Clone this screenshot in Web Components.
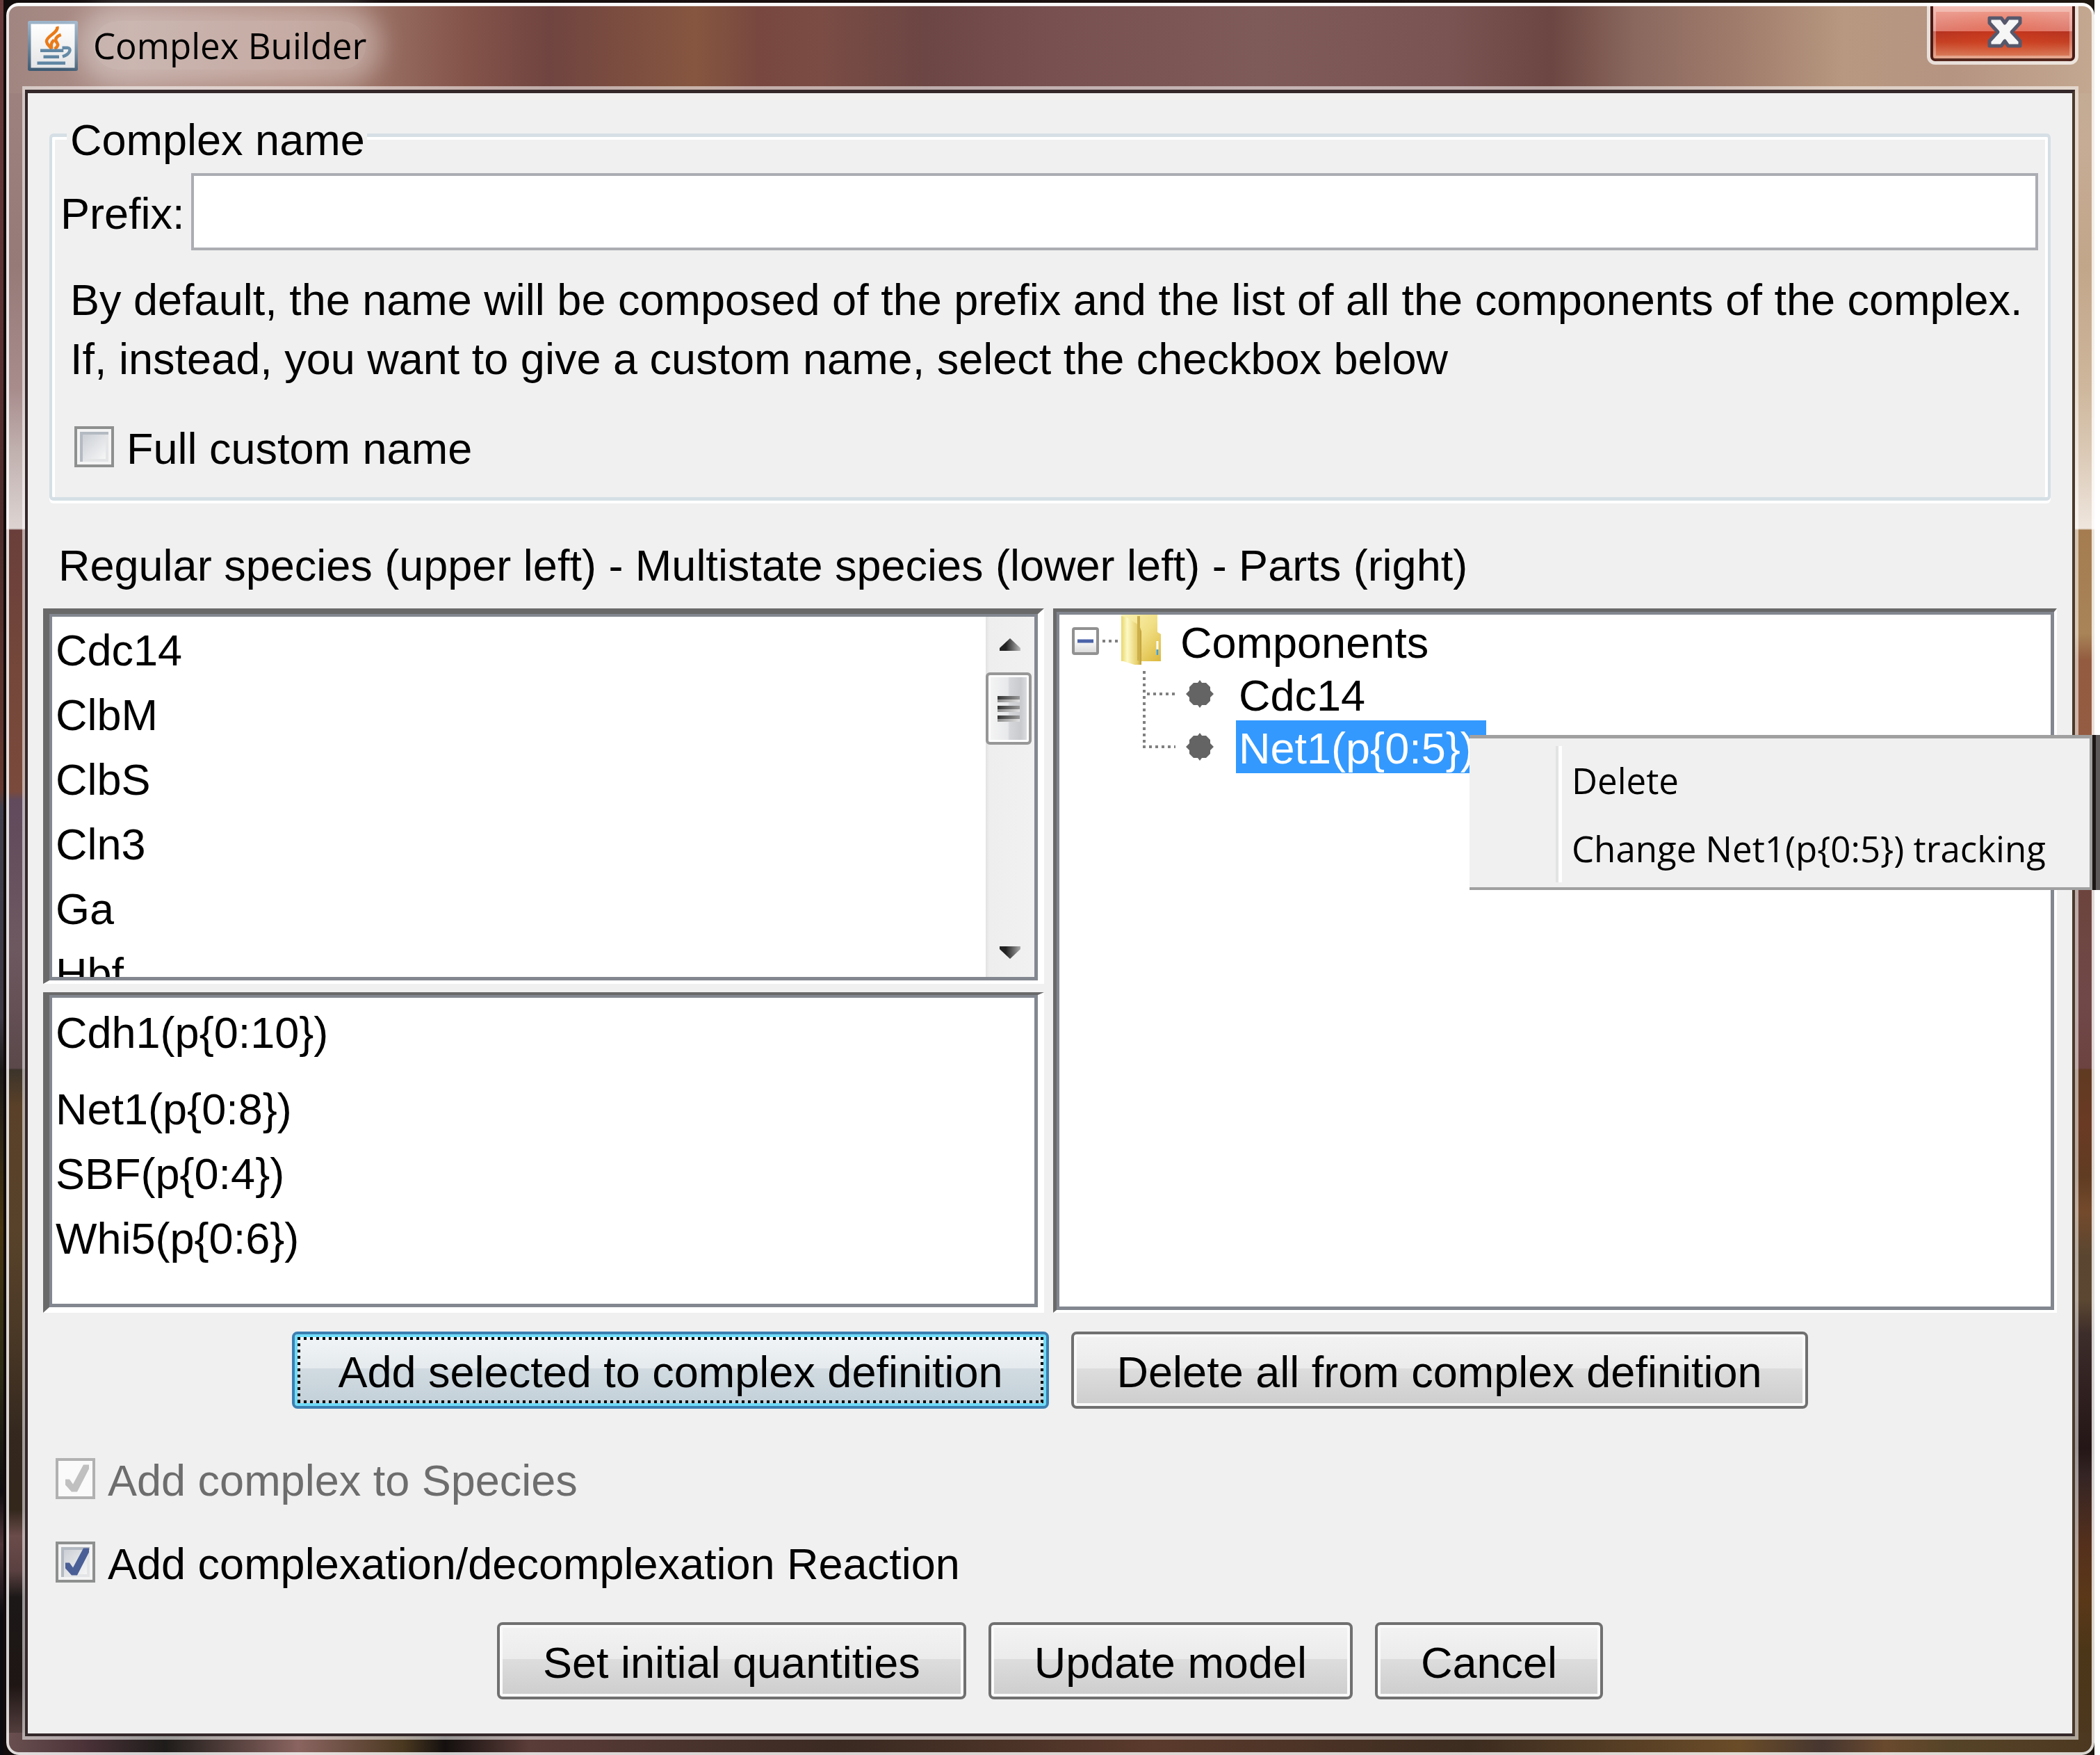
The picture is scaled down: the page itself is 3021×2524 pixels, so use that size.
<!DOCTYPE html>
<html lang="en">
<head>
<meta charset="utf-8">
<title>Complex Builder</title>
<style>
  html, body { margin: 0; height: 100%; background: #fff; }
  body { font: 63px/70px "Liberation Sans", Arial, sans-serif; color: #000; }
</style>
</head>
<body>
<complex-builder></complex-builder>

<script>
const define = (name, html, setup) => {
  const template = document.createElement('template');
  template.innerHTML = html;
  customElements.define(name, class extends HTMLElement {
    connectedCallback() {
      if (this.shadowRoot) return;
      this.attachShadow({ mode: 'open' }).append(template.content.cloneNode(true));
      if (setup) setup(this, this.shadowRoot);
    }
  });
};

/* Glass window frame with a title bar and a close button */
define('glass-window', `
  <style>
    :host { display: flex; box-sizing: border-box; height: 100%; margin-right: 8px; padding: 4px 0 0 9px;
      background:
        linear-gradient(#6a3c3c, #5a3030 20%, #4c2c2a 30%, #64382e 45%, #403e4c 46%, #3c3844 58%, #1c1a18 61%, #46340f 70%, #2c2c14 78%, #100e10 85%, #4c3438 88%, #0c0c10 92%) left / 5px 100% no-repeat,
        linear-gradient(90deg, #120c0c, #1c1210 60%, #1e170f); }
    .frame { flex: 1; display: flex; flex-direction: column; border-radius: 18px; box-sizing: border-box;
      box-shadow: inset 0 5px rgba(255,255,255,.86), inset 0 0 0 4px rgba(255,255,255,.8);
      background:
        linear-gradient(90deg, #a08580, #b09088 6%, #a88074 14%, #986e62 18%, #84544a 22%, #704440 26%, #7a4c40 29%, #865640 33%, #784840 36%, #7a4c44 39%, #6c4644 44%, #785050 50%, #7e5a58 60%, #7a5452 69%, #6c4642 74%, #8a685e 78%, #a07c6c 83%, #b89880 88%, #b59482 93%, #c4a890) top / 100% 130px no-repeat,
        linear-gradient(90deg, #6a5050, #4a3238 3.8%, #1e1c1a 7.6%, #8a6460 14%, #4a3820 19%, #14100f 21%, #5a3c38 25%, #3a2a22 40%, #5a3a2c 55%, #3c2c20 70%, #6a4c28 83%, #463630 87%, #6a4a2e 90%, #564428 93%, #4c3820) bottom / 100% 32px no-repeat,
        linear-gradient(#a08582, #957a78 15%, #a88c8c 22%, #c0b0ae 25.5%, #ddd4d2 30%, #6a3f3b 30.1%, #74473a 38%, #7a4a3c 45%, #604a5c 45.5%, #6e5860 54%, #5a484a 60.8%, #3c342a 60.9%, #5a4028 63%, #58422a 70%, #4a3826 76%, #33271e 82%, #33271c 86%, #6a4c4a 87.5%, #5a4040 89.5%, #1c1818 91%, #1e1614 96%, #6a5050) left / 32px 100% no-repeat,
        linear-gradient(#bfa890, #c6ac95 8%, #c2a68a 15%, #ceb79c 22%, #dccbb8 26%, #efe6de 30%, #a47c50 30.1%, #a88458 36%, #935c40 37.5%, #945c42 42%, #6c443c 50%, #704848 57%, #6c4340 60.8%, #603a22 60.9%, #6a3a24 64%, #603c22 67%, #744a2c 69%, #5a4630 71.5%, #5c4832 74%, #3c2c2a 76%, #241616 82.5%, #342424 84%, #54301c 88%, #5a3818 91%, #4c3618 94%, #4c3820) right / 32px 100% no-repeat; }
    header { display: flex; align-items: center; height: 120px; padding: 0 23px 0 31px; box-sizing: border-box; }
    h1 { margin: 0 auto 0 0; padding: 2px 0 0 22px; font: 51px/70px "Open Sans", "Noto Sans", sans-serif; }
    h1 span { border-radius: 40px; background: rgba(255,255,255,.34); box-shadow: 0 0 34px 22px rgba(255,255,255,.34); }
    .icon { display: block; width: 72px; height: 72px; padding-top: 4px; }
    button { align-self: flex-start; box-sizing: border-box; width: 218px; height: 89px; padding: 0; font: inherit;
      border: 5px solid rgba(255,255,255,.7); border-top-color: #fff; border-radius: 0 0 12px 12px;
      display: flex; align-items: center; justify-content: center;
      box-shadow: inset 4px 0 #4a1a14, inset -4px 0 #4a1a14, inset 0 -4px #56281e, inset 0 0 0 8px rgba(255,255,255,.3);
      background:
        radial-gradient(closest-side, rgba(255,70,20,.25), transparent),
        linear-gradient(#f0a597, #dd7c70 46%, #b43220 46%, #c44024 65%, #e0906c) padding-box; }
    button svg { display: block; width: 50px; height: 46px; margin: -6px 0 0 5px; }
    main { flex: 1; display: flex; flex-direction: column; min-height: 0; margin: 0 23px 22px;
      border: solid rgba(255,255,255,.55); border-width: 5px 5px 5px 4px; }
    .client { flex: 1; display: flex; flex-direction: column; min-height: 0; background: #f0f0f0; position: relative;
      border: solid #34282a; border-width: 5px 4px 4px; border-right-color: #4a3a2c; }
  </style>
  <div class="frame">
    <header>
      <svg class="icon" viewBox="0 0 16 16" aria-hidden="true">
        <defs>
          <linearGradient id="rim" x2="0" y2="1"><stop offset="0" stop-color="#9fb6cb"/><stop offset="1" stop-color="#3e5a72"/></linearGradient>
          <linearGradient id="face" x2="0" y2="1"><stop offset="0" stop-color="#fff"/><stop offset="1" stop-color="#e4e4e6"/></linearGradient>
        </defs>
        <rect width="16" height="16" rx=".6" fill="url(#rim)"/>
        <rect x="1" y="1" width="14" height="14" fill="url(#face)"/>
        <path d="M9.4 1.8C9.9 3.8 6 4.8 6 6.5c0 1 1 1.6 1.6 2.4-.2-1.2-.2-2 .8-2.8M10.6 4.4C9.2 4.9 8.3 6 9.4 7.1c.5.7 0 1.3-.8 1.9" fill="none" stroke="#ea7a18" stroke-width="1"/>
        <path d="M4 9.5h7.4M5 11.5h5M3 13.5h9M11 8.6h1.7c1.2 0 1.1 2-1.6 2.8" fill="none" stroke="#5f86a3" stroke-width="1"/>
      </svg>
      <h1><span></span></h1>
      <button type="button" aria-label="Close">
        <svg viewBox="0 0 50 46" aria-hidden="true">
          <path d="M3 3H20L25 10L30 3H47V10L35 23L47 36V43H30L25 36L20 43H3V36L15 23L3 10Z" fill="#f6f6f6" stroke="#56586c" stroke-width="5" stroke-linejoin="round"/>
        </svg>
      </button>
    </header>
    <main><div class="client"><slot></slot></div></main>
  </div>`,
  (host, root) => { root.querySelector('h1 span').textContent = host.getAttribute('caption'); });

/* Etched group box */
define('group-box', `
  <style>
    :host { display: block; }
    fieldset { margin: 0; min-width: 0; padding: 13px 14px 38px 12px;
      border: solid #d5dfe5; border-width: 5px 4px; border-radius: 6px;
      box-shadow: inset 4px 4px #fff, inset -4px 0 #fff, 0 4px #fff; }
    legend { margin-left: 9px; padding: 14px 3px 0 5px; background: #f0f0f0; line-height: 70px; }
  </style>
  <fieldset><legend></legend><slot></slot></fieldset>`,
  (host, root) => { root.querySelector('legend').textContent = host.getAttribute('caption'); });

define('text-field', `
  <style>
    :host { display: flex; align-items: center; gap: 9px; }
    label { padding-top: 5px; }
    input { flex: 1; min-width: 0; box-sizing: border-box; height: 111px; padding: 0 12px; border: 4px solid #abadb3;
      border-radius: 0; background: #fff; font: inherit; color: inherit; outline: none; }
  </style>
  <label for="field"></label><input id="field" type="text">`,
  (host, root) => { root.querySelector('label').textContent = host.getAttribute('label'); });

define('check-field', `
  <style>
    :host { display: block; }
    label { display: flex; width: fit-content; align-items: center; gap: 18px; height: 70px; }
    span { padding-top: 5px; }
    input { appearance: none; flex: none; position: relative; box-sizing: border-box; width: 57px; height: 59px; margin: 0;
      border: 4px solid #8e8f8f; background: linear-gradient(135deg, #cbcfd5, #f6f6f6) center / 33px 35px no-repeat #f4f4f4;
      box-shadow: inset 0 0 0 4px #f4f4f4, inset 8px 8px #b4bac2, inset -8px -8px #e4e5e7; }
    input:checked::after { content: ""; position: absolute; inset: -4px; background: #4b5f97;
      clip-path: polygon(14px 31px, 20px 31px, 25px 38px, 40px 10px, 48px 10px, 48px 16px, 31px 49px, 23px 49px, 14px 39px); }
    input:disabled { border-color: #b1b1b1; background: #fafafa; box-shadow: none; }
    input:disabled::after { background: #c0c0c0; }
    input:disabled + span { color: #6d6d6d; }
  </style>
  <label><input type="checkbox"><span><slot></slot></span></label>`,
  (host, root) => {
    const box = root.querySelector('input');
    box.checked = host.hasAttribute('checked');
    box.disabled = host.hasAttribute('disabled');
  });

define('push-button', `
  <style>
    :host { display: block; }
    button { display: block; box-sizing: border-box; height: 111px; padding: 5px 62px 0; font: inherit; color: #000; white-space: nowrap;
      border: 4px solid #707070; border-radius: 8px; box-shadow: inset 0 0 0 4px #fafafa;
      background: linear-gradient(#f3f3f3, #ebebeb 48%, #dddddd 48%, #cdcdcd); }
    :host([default]) button { border-color: #3c7fb1; box-shadow: inset 0 0 0 4px #70dcf8;
      background:
        repeating-linear-gradient(90deg, #000 0 4px, transparent 4px 9px) center top 4px / calc(100% - 8px) 4px no-repeat,
        repeating-linear-gradient(90deg, #000 0 4px, transparent 4px 9px) center bottom 4px / calc(100% - 8px) 4px no-repeat,
        repeating-linear-gradient(#000 0 4px, transparent 4px 9px) left 4px center / 4px calc(100% - 8px) no-repeat,
        repeating-linear-gradient(#000 0 4px, transparent 4px 9px) right 4px center / 4px calc(100% - 8px) no-repeat,
        linear-gradient(#f2f5f7, #e4eaed 48%, #d1dbe1 48%, #c3d0d8) padding-box; }
  </style>
  <button type="button"><slot></slot></button>`);

define('button-row', `
  <style>:host { display: flex; justify-content: center; gap: 32px; }</style>
  <slot></slot>`);

/* Sunken pane */
define('sunken-pane', `
  <style>
    :host { display: flex; box-sizing: border-box; min-height: 0; overflow: hidden;
      border-style: solid; border-color: #696969 #fff #fff #696969; border-width: 5px 4px 4px 5px; background: #fff; }
    :host([thick]) { border-width: 8px 9px 5px 9px; }
    :host([thick=lower]) { border-width: 4px 9px 8px 9px; }
    div { flex: 1; display: flex; min-width: 0; overflow: hidden; border: solid #828790; border-width: 4px 5px 5px 4px; }
  </style>
  <div><slot></slot></div>`);

define('species-list', `
  <style>
    :host { flex: 1; display: block; overflow: hidden; }
    ul { margin: 0; padding: 2px 5px 0; list-style: none; }
    li { line-height: 93px; }
    :host([spaced]) ul { padding-top: 4px; }
    :host([spaced]) li:first-child { margin-bottom: 17px; }
  </style>
  <ul role="listbox"></ul>`,
  (host, root) => {
    for (const name of host.getAttribute('items').split('|')) {
      const li = document.createElement('li');
      li.setAttribute('role', 'option');
      li.textContent = name;
      root.querySelector('ul').append(li);
    }
  });

define('scroll-track', `
  <style>
    :host { display: flex; flex-direction: column; align-items: center; box-sizing: border-box; width: 70px; padding: 31px 0 26px;
      background: linear-gradient(90deg, #e2e2e2, #eee 8%, #f1f1f1); }
    svg { display: block; width: 32px; height: 18px; }
    .thumb { align-self: flex-start; box-sizing: border-box; width: 66px; height: 104px; margin: 31px 0 auto; border: 4px solid #979797; border-radius: 6px;
      display: flex; flex-direction: column; align-items: center; justify-content: center; gap: 5px;
      box-shadow: inset 0 0 0 3px #fdfdfd; background: linear-gradient(90deg, #f5f5f5, #e8e9eb 48%, #d6d7da 52%, #c8cace 80%, #e2e2e6); }
    i { width: 32px; height: 9px; background: linear-gradient(90deg, #333, #999) top / 100% 5px no-repeat, linear-gradient(90deg, #8a8a8a, #e2e2e2); }
  </style>
  <svg viewBox="0 0 32 18" aria-hidden="true"><defs><linearGradient id="a"><stop offset=".3" stop-color="#222"/><stop offset="1" stop-color="#bbb"/></linearGradient></defs><path d="M16 0L31 14V18H1V14Z" fill="url(#a)"/></svg>
  <div class="thumb"><i></i><i></i><i></i></div>
  <svg viewBox="0 0 32 18" aria-hidden="true"><defs><linearGradient id="b"><stop offset=".3" stop-color="#222"/><stop offset="1" stop-color="#aaa"/></linearGradient></defs><path d="M1 0H31V4L16 18L1 4Z" fill="url(#b)"/></svg>`);

define('component-tree', `
  <style>
    :host { display: block; flex: 1; }
    ul { margin: 0; padding: 0; list-style: none; }
    .row { display: flex; align-items: center; height: 76px; }
    .row > svg { flex: none; display: block; }
    .root { padding-left: 18px; }
    .child { padding-left: 117px; }
    .name { box-sizing: border-box; height: 76px; padding: 5px 16px 0 4px; line-height: 70px; }
    .selected .name { background: #3399ff; color: #fff; }
  </style>
  <ul role="tree">
    <li role="treeitem">
      <div class="row root">
        <svg width="152" height="76" viewBox="0 0 152 76" aria-hidden="true">
          <defs>
            <linearGradient id="box" x2="0" y2="1"><stop offset=".4" stop-color="#fff"/><stop offset="1" stop-color="#d8d8d8"/></linearGradient>
            <linearGradient id="gold" x2="1" y2="1"><stop offset="0" stop-color="#fbf3b4"/><stop offset=".5" stop-color="#f1df85"/><stop offset="1" stop-color="#dcb83c"/></linearGradient>
            <linearGradient id="leaf"><stop offset="0" stop-color="#e8d66e"/><stop offset=".3" stop-color="#fdf9c4"/><stop offset=".8" stop-color="#e6cf6a"/><stop offset="1" stop-color="#bd9b34"/></linearGradient>
          </defs>
          <rect x="2" y="20" width="35" height="36" rx="2" fill="url(#box)" stroke="#919191" stroke-width="4"/>
          <path d="M8 38H31" stroke="#4b63a9" stroke-width="5"/>
          <path d="M44 38H68" stroke="#808080" stroke-width="4" stroke-dasharray="4 5"/>
          <path d="M71 0H123V25L128 28V67H71Z" fill="url(#gold)"/>
          <path d="M71 2Q80 3 88 10Q98 14 100 24V72H90L71 66Z" fill="url(#leaf)"/>
          <path d="M96 2V66" stroke="#cdb04e" stroke-width="4"/>
          <path d="M123 38V58" stroke="#fff" stroke-width="3"/><path d="M123 50V58" stroke="#4aa0c8" stroke-width="3"/>
        </svg>
        <span class="name">Components</span>
      </div>
      <ul role="group">
        <li role="treeitem" class="row child">
          <svg width="137" height="76" viewBox="0 0 137 76" aria-hidden="true">
            <path d="M5 5V76M9 38H50" fill="none" stroke="#808080" stroke-width="4" stroke-dasharray="4 5"/>
            <path d="M85 18l3 4h6l6 6v5l5 5-5 5v5l-6 6h-6l-3 4-3-4h-6l-6-6v-5l-5-5 5-5v-5l6-6h6z" fill="#646464"/>
          </svg>
          <span class="name">Cdc14</span>
        </li>
        <li role="treeitem" class="row child selected" aria-selected="true">
          <svg width="137" height="76" viewBox="0 0 137 76" aria-hidden="true">
            <path d="M5 1V36M3 38H50" fill="none" stroke="#808080" stroke-width="4" stroke-dasharray="4 5"/>
            <path d="M85 18l3 4h6l6 6v5l5 5-5 5v5l-6 6h-6l-3 4-3-4h-6l-6-6v-5l-5-5 5-5v-5l6-6h6z" fill="#646464"/>
          </svg>
          <span class="name">Net1(p{0:5})</span>
        </li>
      </ul>
    </li>
  </ul>`);

define('context-menu', `
  <style>
    :host { display: block; box-sizing: border-box; width: 896px; padding: 11px 0 7px; background: #f0f0f0;
      border: solid #a0a0a0; border-width: 5px 4px 4px 0; box-shadow: 5px 0 #1c1616, 11px 0 #5c585a; }
    div { margin-left: 124px; border-left: 4px solid #e2e3e3; box-shadow: inset 5px 0 #fff; }
    button { display: block; width: 100%; height: 98px; padding: 0 0 0 19px; border: 0; background: none; color: #000;
      font: 51px/98px "Open Sans", "Noto Sans", sans-serif; text-align: left; white-space: nowrap; }
  </style>
  <div role="menu">
    <button type="button" role="menuitem">Delete</button>
    <button type="button" role="menuitem">Change Net1(p{0:5}) tracking</button>
  </div>`);

define('complex-builder', `
  <style>
    :host { display: block; position: relative; height: 100vh; }
    group-box { margin: 18px 31px 0; }
    p { margin: 29px 0 48px 14px; line-height: 85px; white-space: nowrap; }
    .custom { margin-left: 20px; }
    h2 { margin: 58px 44px 27px; font: inherit; }
    .split { flex: 1; min-height: 0; display: grid; grid-template-columns: 1440fr 1444fr; gap: 13px; margin: 0 22px; }
    .left { display: grid; grid-template-rows: 539fr 461fr; gap: 12px; min-height: 0; }
    .actions { margin-top: 27px; }
    .options { display: flex; flex-direction: column; gap: 50px; margin: 65px 40px 52px; }
    .footer { margin-bottom: 49px; }
    context-menu { position: absolute; top: 1057px; right: 11px; }
  </style>
  <glass-window caption="Complex Builder">
    <group-box caption="Complex name">
      <text-field label="Prefix:"></text-field>
      <p>By default, the name will be composed of the prefix and the list of all the components of the complex.<br>If, instead, you want to give a custom name, select the checkbox below</p>
      <check-field class="custom">Full custom name</check-field>
    </group-box>
    <h2>Regular species (upper left) - Multistate species (lower left) - Parts (right)</h2>
    <div class="split">
      <div class="left">
        <sunken-pane thick="upper">
          <species-list items="Cdc14|ClbM|ClbS|Cln3|Ga|Hbf"></species-list>
          <scroll-track></scroll-track>
        </sunken-pane>
        <sunken-pane thick="lower">
          <species-list spaced items="Cdh1(p{0:10})|Net1(p{0:8})|SBF(p{0:4})|Whi5(p{0:6})"></species-list>
        </sunken-pane>
      </div>
      <sunken-pane><component-tree></component-tree></sunken-pane>
    </div>
    <button-row class="actions">
      <push-button default>Add selected to complex definition</push-button>
      <push-button>Delete all from complex definition</push-button>
    </button-row>
    <div class="options">
      <check-field checked disabled>Add complex to Species</check-field>
      <check-field checked>Add complexation/decomplexation Reaction</check-field>
    </div>
    <button-row class="footer">
      <push-button>Set initial quantities</push-button>
      <push-button>Update model</push-button>
      <push-button>Cancel</push-button>
    </button-row>
  </glass-window>
  <context-menu></context-menu>`);
</script>
</body>
</html>
